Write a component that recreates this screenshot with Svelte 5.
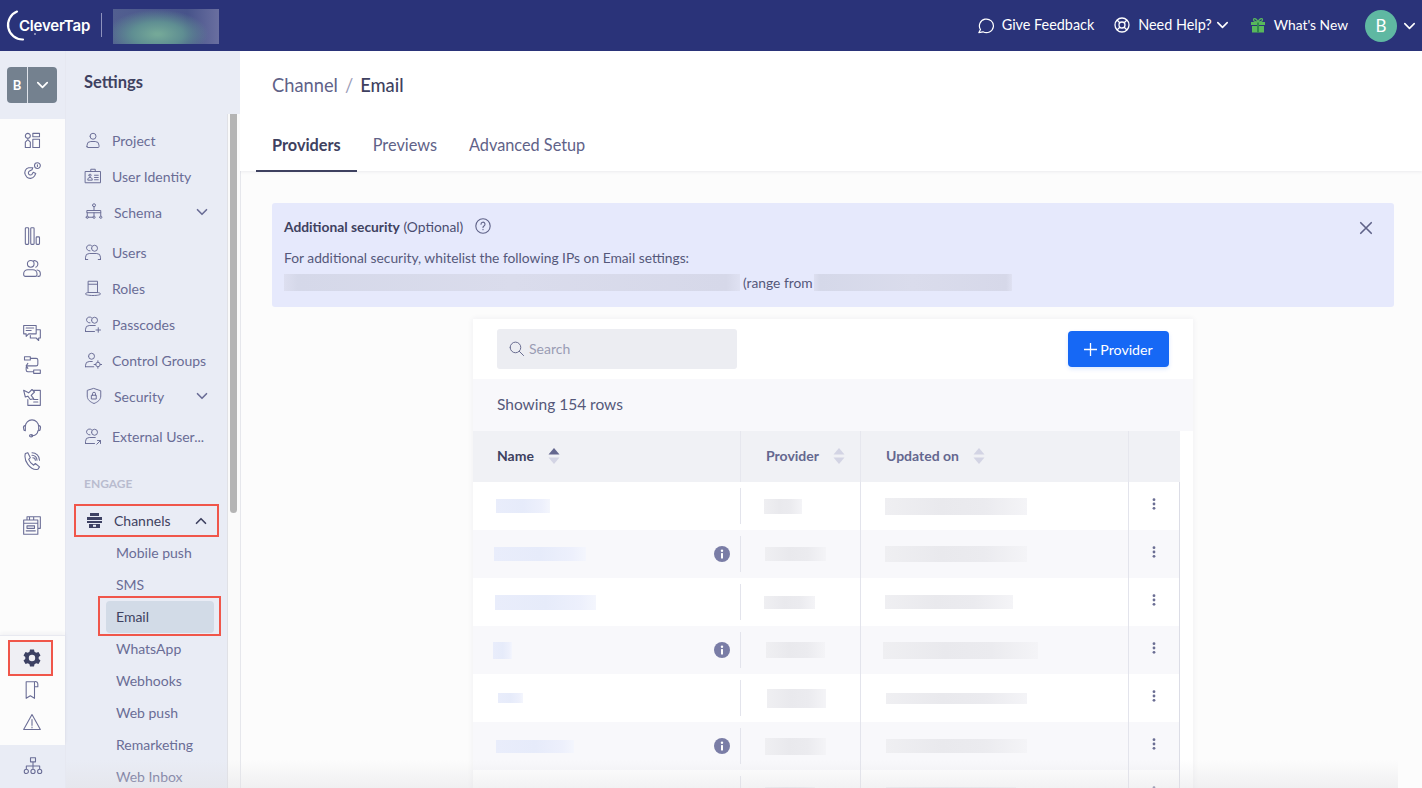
<script>
  const icons = {
    widgets: 'M4 7a3 3 0 1 0 6 0a3 3 0 1 0 -6 0M13 4h8v4h-8zM4 21v-6.500l3-3 3 3V21zM13 11h8v10h-8z',
    magnet: 'M13 8 8 8a6 6 0 0 0-4 8.500l1.500 2.500a6 6 0 0 0 9.500-1l1.500-3-3-1.500-1.500 2.500a2.500 2.500 0 0 1-4-.5a2.500 2.500 0 0 1 1-3.500l3-1.500zM15 5.500a3.500 3.500 0 1 0 7 0a3.500 3.500 0 1 0-7 0M18.500 4.500v2',
    bars: 'M4 3a1 1 0 0 1 1-1h2a1 1 0 0 1 1 1v18a1 1 0 0 1-1 1H5a1 1 0 0 1-1-1zM10.500 3a1 1 0 0 1 1-1h2a1 1 0 0 1 1 1v18a1 1 0 0 1-1 1h-2a1 1 0 0 1-1-1zM17 14a1 1 0 0 1 1-1h2a1 1 0 0 1 1 1v7a1 1 0 0 1-1 1h-2a1 1 0 0 1-1-1z',
    people: 'M6.500 7a4 4 0 1 0 8 0a4 4 0 1 0-8 0M13.500 3.500a4 4 0 1 1 3 7.500M2 20v-1a5 5 0 0 1 5-5h6a5 5 0 0 1 5 5v1a2 2 0 0 1-2 2H4a2 2 0 0 1-2-2zM18 14.500a4.500 4.500 0 0 1 4 4.500v1a2 2 0 0 1-2 2h-1',
    chat: 'M2 3h15v10H8l-3 3v-3H2zM17 8h5v10h-2v3l-3-3h-7v-3M5 6h9M5 9h6',
    flow: 'M3 2h7v4H3zM14 18h8v4h-8zM10 4h7a2 2 0 0 1 2 2v5a2 2 0 0 1-2 2H7a2 2 0 0 0-2 2v3a2 2 0 0 0 2 2h7M7 10l-2 3 2 3',
    campaign: 'M2 4l6 3 4-4 3 3-4 4 3 4-4 1-3-4-3 1zM14 4h8v18H7v-7M14 15h5M14 18h5',
    headset: 'M4 13V9a8 8 0 0 1 16 0v4M4 8a2 2 0 0 0-2 3v1a2 2 0 0 0 2 2zM20 8a2 2 0 0 1 2 3v1a2 2 0 0 1-2 2zM19 14a6 6 0 0 1-6 6h-2M9 20a2 1.500 0 1 0 4 0a2 1.500 0 1 0-4 0',
    phone: 'M4 3l3-1 3 6-2 2a14 14 0 0 0 6 7l2-2 5 4-2 3c-4 1-9-2-12-6S3 7 4 3zM12 2a9 9 0 0 1 9 9M12 5a6 6 0 0 1 6 6M13 8a3 3 0 0 1 3 3',
    print: 'M6 6V2h16v14h-3M2 6h17v17H2zM2 10h17M6 13h9v3H6zM5 19h11M9 2v4M14 2v4',
    bookmark: 'M5 2h10v20l-5-3-5 3zM15 2a3 3 0 0 1 4 3v3h-4',
    warn: 'M12 3 2 21h20zM12 9v7M12 18v1',
    tree: 'M9 2h6v5H9zM12 7v5M4 12h16M4 12v4M12 12v4M20 12v4M1.500 18.500a2.500 2.500 0 1 0 5 0a2.500 2.500 0 1 0-5 0M9.500 18.500a2.500 2.500 0 1 0 5 0a2.500 2.500 0 1 0-5 0M17.500 18.500a2.500 2.500 0 1 0 5 0a2.500 2.500 0 1 0-5 0',
    user: 'M8 7a4 4 0 1 0 8 0a4 4 0 1 0-8 0M4 21v-2a5 5 0 0 1 5-5h6a5 5 0 0 1 5 5v2a1 1 0 0 1-1 1H5a1 1 0 0 1-1-1z',
    card: 'M2 6h20v15H2zM9 6V3h6v3M5 17c0-2 1-3 3-3s3 1 3 3zM6.500 11a1.500 1.500 0 1 0 3 0a1.500 1.500 0 1 0-3 0M14 11h5M14 14h5M14 17h5',
    schema: 'M10 3a2 2 0 1 0 4 0a2 2 0 1 0-4 0M12 5v5M3 10h18v3H3zM3 13v4M12 13v4M21 13v4M1.500 19a1.500 1.500 0 1 0 3 0a1.500 1.500 0 1 0-3 0M10.500 19a1.500 1.500 0 1 0 3 0a1.500 1.500 0 1 0-3 0M19.500 19a1.500 1.500 0 1 0 3 0a1.500 1.500 0 1 0-3 0M4 19h6',
    hat: 'M6 3h12v15H6zM6 18c-2 0-4 1-4 2s4 2 10 2 10-1 10-2-2-2-4-2M6 7h12',
    usersq: 'M10 7a4 4 0 1 0 8 0a4 4 0 1 0-8 0M10 3.500a4 4 0 1 0-2 7M2 22v-3a5 5 0 0 1 5-5h10a5 5 0 0 1 5 5v3M2 22h3M19 22h3',
    plus: 'M10 7a4 4 0 1 0 8 0a4 4 0 1 0-8 0M10 3.500a4 4 0 1 0-2 7M2 22v-3a5 5 0 0 1 5-5h8M2 22h12M19 17v6M16 20h6',
    groupgear: 'M6 7a4 4 0 1 0 8 0a4 4 0 1 0-8 0M2 21v-2a5 5 0 0 1 5-5h4M2 21h11M15.500 18a3 3 0 1 0 6 0a3 3 0 1 0-6 0M18.500 13v2M18.500 21v2M13.500 18h2M21.500 18h2',
    shield: 'M12 2l9 3v7c0 5-4 8-9 10-5-2-9-5-9-10V5zM9 11h6v5H9zM10 11V9a2 2 0 0 1 4 0v2',
    extern: 'M10 7a4 4 0 1 0 8 0a4 4 0 1 0-8 0M10 3.500a4 4 0 1 0-2 7M2 22v-3a5 5 0 0 1 5-5h8M2 22h12M17 23l5-5M18 18h4v4',
    chevDown: 'M6 9l6 6 6-6',
    chevUp: 'M6 15l6-6 6 6',
    search: 'M3 10.500a7.500 7.500 0 1 0 15 0a7.500 7.500 0 1 0-15 0M16 16l6 6',
    close: 'M5 5l14 14M19 5 5 19'
  };

  const rail = [
    { icon: 'widgets', gap: 0 }, { icon: 'magnet', gap: 0 },
    { icon: 'bars', gap: 33 }, { icon: 'people', gap: 0 },
    { icon: 'chat', gap: 33 }, { icon: 'flow', gap: 0 }, { icon: 'campaign', gap: 0 }, { icon: 'headset', gap: 0 }, { icon: 'phone', gap: 0 },
    { icon: 'print', gap: 32 }
  ];

  const menu = [
    { label: 'Project', icon: 'user' },
    { label: 'User Identity', icon: 'card' },
    { label: 'Schema', icon: 'schema', chev: true, after: 4 },
    { label: 'Users', icon: 'usersq' },
    { label: 'Roles', icon: 'hat' },
    { label: 'Passcodes', icon: 'plus' },
    { label: 'Control Groups', icon: 'groupgear' },
    { label: 'Security', icon: 'shield', chev: true, after: 4 },
    { label: 'External User...', icon: 'extern' }
  ];

  const subs = ['Mobile push', 'SMS', 'Email', 'WhatsApp', 'Webhooks', 'Web push', 'Remarketing', 'Web Inbox'];

  const rows = [
    { n: [23, 54, 14], p: [23, 38, 15], u: [24, 142, 17] },
    { n: [21, 92, 14], p: [24, 61, 14], u: [24, 142, 16], info: true },
    { n: [22, 101, 15], p: [23, 51, 13], u: [24, 128, 14] },
    { n: [20, 19, 17], p: [25, 59, 16], u: [22, 155, 17], info: true },
    { n: [25, 25, 10], p: [26, 59, 19], u: [25, 141, 11] },
    { n: [23, 78, 13], p: [24, 61, 17], u: [25, 141, 14], info: true },
    { n: [22, 70, 13], p: [24, 50, 14], u: [25, 130, 14] }
  ];
</script>

{#snippet icon(name, size = 20, cls = '')}
  <svg class="ico {cls}" width={size} height={size} viewBox="0 0 24 24" fill="none" stroke="currentColor" stroke-width="1.300" stroke-linecap="round" stroke-linejoin="round"><path d={icons[name]} /></svg>
{/snippet}

{#snippet chev()}
  <svg class="tool-chev" width="11" height="8" viewBox="5 7 14 10" fill="none" stroke="#fff" stroke-width="2" stroke-linecap="round" stroke-linejoin="round"><path d={icons.chevDown} /></svg>
{/snippet}

{#snippet sort(active)}
  <svg class="sort" width="12" height="18" viewBox="0 0 12 18"><path d="M6 1l5.500 6.500H.5z" fill={active ? '#64678f' : '#d3d4e4'} /><path d="M.5 10.500h11L6 17z" fill="#d3d4e4" /></svg>
{/snippet}

{#snippet info()}
  <svg class="info" width="16" height="16" viewBox="0 0 16 16"><circle cx="8" cy="8" r="8" fill="#7a7da6" /><rect x="7" y="7" width="2" height="5.500" rx=".5" fill="#fff" /><circle cx="8" cy="4.700" r="1.200" fill="#fff" /></svg>
{/snippet}

<div class="page">
  <header class="top">
    <div class="brand">
      <svg class="arc" width="38" height="42" viewBox="0 0 38 42" fill="none" stroke="#fff" stroke-width="2.200" stroke-linecap="round"><path d="M17 11.600A14.500 14.500 0 0 0 23 39.500" /><circle cx="35" cy="34" r=".8" fill="#fff" stroke="none" /></svg>
      <span class="logo">CleverTap</span>
      <span class="sep"></span>
      <span class="account"></span>
    </div>
    <nav class="tools">
      <span class="tool">
        <svg width="18" height="18" viewBox="0 0 18 18" fill="none" stroke="#fff" stroke-width="1.200"><path d="M3.500 13.500a7 6.800 0 1 1 2.500 2.300L1.800 16.700z" stroke-linejoin="round" /></svg>
        Give Feedback
      </span>
      <span class="tool help">
        <svg width="16" height="16" viewBox="0 0 16 16" fill="none" stroke="#fff" stroke-width="1.300"><circle cx="8" cy="8" r="7" /><circle cx="8" cy="8" r="3" /><path d="M3 3l2.800 2.800M13 3l-2.800 2.800M3 13l2.800-2.800M13 13l-2.800-2.800" /></svg>
        Need Help?
        {@render chev()}
      </span>
      <span class="tool new">
        <svg width="16" height="16" viewBox="0 0 16 16"><path d="M1 5h14v3H1zM2 9h12v6.500H2z" fill="#58b85c" /><path d="M7 5h2v10.500H7z" fill="#2f8a4a" /><path d="M8 4.800C6 1 3.500 1 3.500 2.800S6 5 8 4.800C10 1 12.500 1 12.500 2.800S10 5 8 4.800z" fill="none" stroke="#58b85c" stroke-width="1.200" /></svg>
        What's New
      </span>
      <span class="avatar">B</span>
      {@render chev()}
    </nav>
  </header>

  <div class="body">
    <aside class="rail">
      <div class="rail-head">
        <div class="switch">
          <span class="switch-b">B</span>
          <span class="switch-c"><svg width="11" height="8" viewBox="5 7 14 10" fill="none" stroke="#fff" stroke-width="2.200" stroke-linecap="round" stroke-linejoin="round"><path d={icons.chevDown} /></svg></span>
        </div>
      </div>
      <div class="rail-list">
        {#each rail as r}
          <span class="rail-item" style="margin-top:{r.gap}px">{@render icon(r.icon, 20)}</span>
        {/each}
      </div>
      <div class="rail-foot">
        <span class="gear">
          <svg width="18" height="18" viewBox="0 0 18 18"><path fill="#3d4163" fill-rule="evenodd" d="M7 .5h4l.5 2.300 1.700 1 2.300-.7 2 3.400-1.800 1.600v1.800l1.800 1.600-2 3.400-2.300-.7-1.700 1-.5 2.300H7l-.5-2.300-1.700-1-2.300.7-2-3.400 1.800-1.600V8.100L.5 6.500l2-3.400 2.300.7 1.700-1zM9 5.800a3.200 3.200 0 1 0 0 6.400a3.200 3.200 0 1 0 0-6.400z" /></svg>
        </span>
        <span class="rail-item foot">{@render icon('bookmark', 20)}</span>
        <span class="rail-item foot">{@render icon('warn', 20)}</span>
      </div>
      <div class="rail-org">{@render icon('tree', 20)}</div>
    </aside>

    <aside class="side">
      <div class="side-head">Settings</div>
      <div class="side-body">
        <div class="side-scroll">
          {#each menu as m}
            <div class="m-item" class:has-chev={m.chev} style="margin-bottom:{m.after ?? 0}px">
              {@render icon(m.icon, 18)}
              <span class="m-label">{m.label}</span>
              {#if m.chev}{@render icon('chevDown', 18, 'm-chev')}{/if}
            </div>
          {/each}
          <div class="m-section">ENGAGE</div>
          <div class="m-item has-chev open">
            <svg class="ico" width="17" height="17" viewBox="0 0 17 17" fill="#3d4163"><path d="M4 1h9v3H4zM1 5h15v3H1zM1 9h15v2H1zM3 12h11v4H3z" /><rect x="7" y="12.800" width="3" height="2" fill="#e9ecf5" /></svg>
            <span class="m-label">Channels</span>
            {@render icon('chevUp', 18, 'm-chev')}
          </div>
          <div class="subs">
            {#each subs as s}
              <div class="sub" class:active={s === 'Email'}>{s}</div>
            {/each}
          </div>
        </div>
        <div class="track"><div class="thumb"></div></div>
      </div>
    </aside>

    <main class="main">
      <section class="head">
        <div class="crumb"><span>Channel</span><span class="slash">/</span><strong>Email</strong></div>
        <div class="tabs">
          <span class="tab on">Providers</span>
          <span class="tab">Previews</span>
          <span class="tab">Advanced Setup</span>
        </div>
      </section>

      <section class="content">
        <div class="alert">
          <button class="alert-x" aria-label="Close">{@render icon('close', 18, 'x-ico')}</button>
          <div class="alert-title">
            <b>Additional security</b> (Optional)
            <svg width="16" height="16" viewBox="0 0 16 16" fill="none" stroke="#5f6288" stroke-width="1.100"><circle cx="8" cy="8" r="7.200" /><path d="M6 6.200a2 2 0 1 1 3 1.700c-.7.400-1 .8-1 1.500M8 11.200v.6" stroke-linecap="round" /></svg>
          </div>
          <div class="alert-line">For additional security, whitelist the following IPs on Email settings:</div>
          <div class="alert-ips"><span class="blur ip1"></span><span>(range from</span><span class="blur ip2"></span></div>
        </div>

        <div class="card">
          <div class="card-top">
            <div class="search">{@render icon('search', 17)}<span>Search</span></div>
            <button class="add"><svg width="13" height="13" viewBox="0 0 13 13" stroke="#fff" stroke-width="1.300" fill="none"><path d="M6.500 0v13M0 6.500h13" /></svg>Provider</button>
          </div>
          <div class="count">Showing 154 rows</div>
          <div class="table">
            <div class="tr th">
              <div class="c first"><span class="strong">Name</span>{@render sort(true)}</div>
              <div class="c"><span>Provider</span>{@render sort(false)}</div>
              <div class="c"><span>Updated on</span>{@render sort(false)}</div>
              <div class="c"></div>
            </div>
            {#each rows as r, i}
              <div class="tr row" class:alt={i % 2 === 1}>
                <div class="c name">
                  <span class="patch blue" style="margin-left:{r.n[0]}px;width:{r.n[1]}px;height:{r.n[2]}px"></span>
                  {#if r.info}{@render info()}{/if}
                </div>
                <div class="c cell"><span class="patch" style="margin-left:{r.p[0]}px;width:{r.p[1]}px;height:{r.p[2]}px"></span></div>
                <div class="c cell"><span class="patch" style="margin-left:{r.u[0]}px;width:{r.u[1]}px;height:{r.u[2]}px"></span></div>
                <div class="c cell dots"><svg width="4" height="12" viewBox="0 0 4 12" fill="#6a6d93"><circle cx="2" cy="1.700" r="1.400" /><circle cx="2" cy="6" r="1.400" /><circle cx="2" cy="10.300" r="1.400" /></svg></div>
              </div>
            {/each}
          </div>
        </div>
      </section>
    </main>
  </div>
  <div class="fade"></div>
</div>

<style>
  :global(body) { margin: 0; background: #fff; }
  * { box-sizing: border-box; }
  .page { width: 1422px; height: 788px; overflow: hidden; position: relative; display: flex; flex-direction: column; font-family: Lato, "Liberation Sans", sans-serif; color: #5f6288; font-size: 14px; }
  .ico { flex: none; display: block; }

  .top { height: 51px; flex: none; background: #2a3379; color: #fff; display: flex; align-items: center; justify-content: space-between; }
  .brand { display: flex; align-items: center; position: relative; height: 100%; padding-left: 19px; }
  .arc { position: absolute; left: 0; top: 0; }
  .logo { font-family: Inter, sans-serif; font-weight: 600; font-size: 15px; letter-spacing: -.2px; width: 82px; margin-top: -1px; }
  .sep { width: 1px; height: 24px; background: #8d92bd; margin-right: 11px; margin-top: -2px; }
  .account { width: 106px; height: 35px; margin-top: 1px; background: radial-gradient(ellipse 48% 70% at 42% 72%, #74a898 5%, #5f8e92 50%, transparent 100%), linear-gradient(90deg, #525f90, #47538a 70%, #6a6fa0); }
  .tools { display: flex; align-items: center; padding-right: 7px; font-size: 14.400px; }
  .tool { display: flex; align-items: center; gap: 7px; padding-bottom: 2px; }
  .help { margin-left: 20px; gap: 8px; }
  .help .tool-chev { margin-left: -3px; }
  .tool-chev { flex: none; }
  .new { margin-left: 22px; gap: 8px; font-size: 13.800px; }
  .avatar { width: 32px; height: 32px; border-radius: 50%; background: #5fb8a2; color: #fff; display: flex; align-items: center; justify-content: center; font-size: 17px; margin: 0 7px 0 17px; }

  .body { flex: 1; min-height: 0; display: flex; }

  .rail { width: 65px; flex: none; background: #fcfcfc; display: flex; flex-direction: column; color: #6a6d96; box-shadow: 1px 0 0 #e6e8f1; z-index: 1; }
  .rail-head { height: 68px; flex: none; background: #e9ecf5; padding: 16px 0 0 7px; }
  .switch { display: flex; width: 50px; height: 36px; border-radius: 4px; overflow: hidden; background: #74818f; color: #fff; }
  .switch-b { width: 21px; display: flex; align-items: center; justify-content: center; font-weight: 700; font-size: 13px; border-right: 1px solid #dfe3ea; }
  .switch-c { flex: 1; display: flex; align-items: center; justify-content: center; }
  .rail-list { flex: 1; display: flex; flex-direction: column; align-items: center; padding-top: 6px; padding-right: 1px; }
  .rail-item { height: 32px; display: flex; align-items: center; justify-content: center; flex: none; }
  .rail-list .rail-item:nth-child(1) { height: 30px; }
  .rail-foot { height: 110px; flex: none; border-top: 1px solid #e8e9f0; box-shadow: 0 -2px 4px rgba(40, 40, 80, .05); display: flex; flex-direction: column; align-items: center; padding-top: 6px; padding-right: 1px; }
  .gear { width: 41px; height: 32px; flex: none; background: #efeff4; display: flex; align-items: center; justify-content: center; outline: 2px solid #f0564a; margin-right: 3px; padding-left: 3px; }
  .rail-org { height: 43px; flex: none; background: #e9ecf5; display: flex; align-items: center; justify-content: center; padding-bottom: 2px; }

  .side { width: 175px; flex: none; background: #e9ecf5; display: flex; flex-direction: column; }
  .side-head { height: 63px; flex: none; padding: 0 0 1px 19px; display: flex; align-items: center; font-weight: 700; font-size: 16.500px; color: #3e4160; }
  .side-body { flex: 1; min-height: 0; display: flex; }
  .side-scroll { flex: 1; min-width: 0; overflow: hidden; padding: 8px 0 0 19px; }
  .track { width: 13px; flex: none; background: #fafafa; border-left: 1px solid #e0e1e6; padding-left: 2px; }
  .thumb { width: 7px; height: 399px; background: #b4b4b4; border-radius: 0 0 4px 4px; }

  .m-item { height: 36px; display: flex; align-items: center; gap: 10px; color: #6a6d96; }
  .m-label { white-space: nowrap; }
  .m-item.has-chev { gap: 11px; padding-left: 1px; }
  .m-item.has-chev .m-label { flex: 1; }
  .m-item :global(.m-chev) { margin: 0 16px 0 0; stroke-width: 2.200; }
  .m-section { font-size: 12px; font-weight: 700; color: #b9bccf; margin-top: 13px; height: 32px; display: flex; align-items: center; }
  .m-item.open { color: #3e4160; height: 29px; outline: 2px solid #f0564a; margin: 7px 8px 0 -8px; padding-left: 10px; width: 141px; gap: 11px; }
  .m-item.open :global(.m-chev) { margin-right: 7px; }
  .subs { margin: 2px 0 0 22px; }
  .sub { height: 32px; display: flex; align-items: center; padding: 0 0 2px 10px; color: #6a6d96; width: 108px; border-radius: 4px; }
  .sub.active { background: #d2dbe7; color: #3e4160; position: relative; }
  .sub.active::after { content: ''; position: absolute; inset: -5px -7px -3px -8px; border: 2px solid #f0564a; }

  .main { flex: 1; min-width: 0; position: relative; background: #fcfcfc; box-shadow: inset 1px 0 0 #e6e7ec; overflow: hidden; }
  .head { height: 120px; background: #fff; box-shadow: 0 1px 3px rgba(40, 40, 80, .08); padding: 22px 0 0 16px; }
  .crumb { margin-left: 16px; height: 24px; display: flex; align-items: center; gap: 7px; font-size: 18.300px; color: #5f6288; }
  .crumb strong { font-weight: 500; color: #3e4160; }
  .slash { color: #9a9cb8; }
  .tabs { display: flex; margin-top: 24px; }
  .tab { padding: 0 16px 2px; display: flex; align-items: center; font-size: 16.300px; height: 51px; color: #5f6288; border-bottom: 2px solid transparent; }
  .tab.on { color: #3e4160; font-weight: 700; border-bottom-color: #3e4160; }

  .content { padding: 32px 28px 0 32px; }
  .alert { height: 104px; background: #e6e9fc; border-radius: 3px; padding: 13px 12px 0; position: relative; font-size: 13.800px; }
  .alert-x { position: absolute; right: 19px; top: 16px; background: none; border: 0; padding: 0; color: #5f6288; }
  .alert-x :global(.x-ico) { stroke-width: 2.200; }
  .alert-title { display: flex; align-items: center; height: 20px; color: #4a4d70; white-space: pre-wrap; }
  .alert-title b { color: #3e4160; }
  .alert-title svg { margin-left: 8px; }
  .alert-line { margin-top: 11px; height: 20px; display: flex; align-items: center; color: #55587a; }
  .alert-ips { display: flex; align-items: center; height: 18px; color: #55587a; margin-top: 6px; }
  .blur { display: block; height: 17px; background: linear-gradient(90deg, #dddff0 0, #d5d8e9 3%, #dadcec 50%, #d6d8e9 97%, #dfe1f2 100%); }
  .ip1 { width: 456px; margin-right: 3px; }
  .ip2 { width: 198px; margin-left: 1px; }

  .card { width: 720px; margin: 12px 0 0 201px; background: #fff; box-shadow: 0 0 6px rgba(40, 40, 80, .07); }
  .card-top { height: 60px; padding: 10px 24px; display: flex; align-items: flex-start; justify-content: space-between; }
  .search { width: 240px; height: 40px; background: #ecedf2; border-radius: 3px; display: flex; align-items: center; gap: 4px; padding: 0 0 1px 11px; color: #9a9cb4; }
  .search :global(.ico) { color: #5f6288; }
  .add { width: 101px; height: 36px; margin-top: 2px; background: #1668f5; border: 0; border-radius: 4px; color: #fff; font: inherit; font-size: 14.200px; display: flex; align-items: center; justify-content: center; gap: 3px; box-shadow: 0 2px 4px rgba(22, 104, 245, .15); }
  .count { height: 52px; background: #f8f8fb; padding: 0 0 2px 24px; display: flex; align-items: center; font-size: 15.500px; color: #55587a; }
  .table { width: 707px; }
  .tr { display: grid; grid-template-columns: 268px 120px 268px 51px; }
  .th { height: 51px; background: #f0f1f5; font-weight: 700; color: #64678f; }
  .th .c { display: flex; align-items: center; gap: 14px; padding: 0 0 2px 25px; border-right: 1px solid #e6e7ee; }
  .th .first { padding-left: 24px; }
  .th .c:last-child { border-right: 0; }
  .strong { color: #3e4160; }
  .row { height: 48px; background: #fff; border-right: 1px solid #dcdde6; }
  .row.alt { background: #f8f8fb; }
  .name { display: flex; align-items: center; position: relative; }
  .name::after { content: ''; position: absolute; right: 0; top: 6px; bottom: 6px; width: 1px; background: #e3e4ec; }
  .cell { display: flex; align-items: center; border-right: 1px solid #e3e4ec; }
  .cell:last-child { border-right: 0; }
  .patch { display: block; background: linear-gradient(90deg, #efeff2, #e9e9ed 40%, #ebebef 70%, #f4f4f7); flex: none; }
  .patch.blue { background: linear-gradient(90deg, #e9edfb, #e6ebfa 50%, #edf0fc 85%, #f4f6fd); }
  .info { position: absolute; left: 241px; top: 16px; }
  .dots { justify-content: center; padding: 0 1px 5px 0; }
  .sort { flex: none; }
  .fade { position: absolute; left: 0; right: 24px; bottom: 0; height: 28px; background: linear-gradient(180deg, rgba(225, 225, 228, 0), rgba(225, 225, 228, .45)); pointer-events: none; }
</style>
